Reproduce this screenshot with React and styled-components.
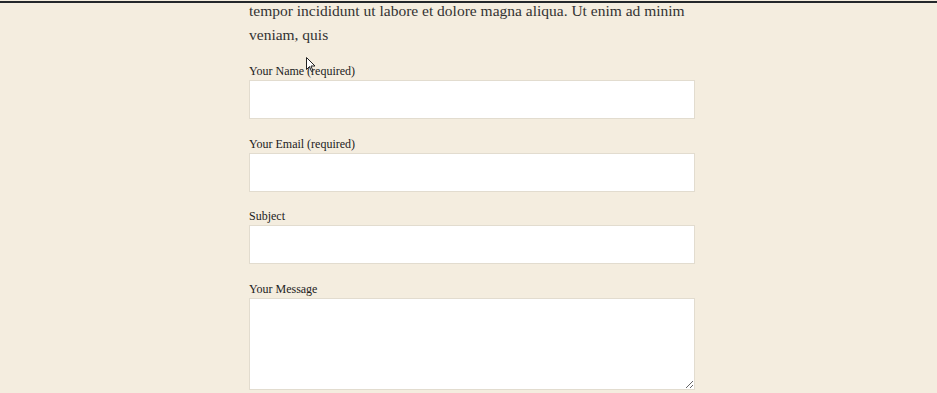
import React from "react";
import styled, { createGlobalStyle } from "styled-components";

const GlobalStyle = createGlobalStyle`
  html, body {
    margin: 0;
    padding: 0;
    background-color: #f4eddf;
  }
  body {
    font-family: "Liberation Serif", "Times New Roman", serif;
    color: #333333;
  }
`;

const Page = styled.div`
  position: relative;
  height: 393px;
  overflow: hidden;
  background-color: #f4eddf;
`;

const TopBar = styled.div`
  position: absolute;
  left: 0;
  right: 0;
  top: 1px;
  height: 2px;
  background-color: #23272b;
  z-index: 2;
`;

const Column = styled.main`
  width: 446px;
  margin-left: 249px;
  margin-top: -1px;
  display: flex;
  flex-direction: column;
`;

const Intro = styled.p`
  margin: 0 0 17px;
  font-size: 15.5px;
  line-height: 24px;
  color: #333333;
`;

const ContactForm = styled.form`
  display: flex;
  flex-direction: column;
  gap: 17.5px;
`;

const Field = styled.label`
  display: flex;
  flex-direction: column;
  gap: 1px;
  font-size: 12px;
  line-height: 15px;
  color: #222222;
`;

const TextInput = styled.input`
  box-sizing: border-box;
  width: 100%;
  height: 39px;
  margin: 0;
  border: 1px solid #e2dccf;
  background-color: #ffffff;
  outline: none;
  font: inherit;
`;

const MessageInput = styled.textarea`
  box-sizing: border-box;
  width: 100%;
  height: 92px;
  margin: 0;
  border: 1px solid #e2dccf;
  background-color: #ffffff;
  outline: none;
  resize: vertical;
  font: inherit;
`;

const Cursor = styled.svg`
  position: absolute;
  left: 306px;
  top: 57px;
  width: 10px;
  height: 16px;
  pointer-events: none;
`;

export default function App() {
  return (
    <>
      <GlobalStyle />
      <Page>
        <TopBar />
        <Column>
          <Intro>
            tempor incididunt ut labore et dolore magna aliqua. Ut enim ad minim
            veniam, quis
          </Intro>
          <ContactForm onSubmit={(e) => e.preventDefault()}>
            <Field>
              Your Name (required)
              <TextInput type="text" />
            </Field>
            <Field>
              Your Email (required)
              <TextInput type="email" />
            </Field>
            <Field>
              Subject
              <TextInput type="text" />
            </Field>
            <Field>
              Your Message
              <MessageInput />
            </Field>
          </ContactForm>
        </Column>
        <Cursor viewBox="0 0 10 16">
          <path
            d="M0.5 0.5 L0.5 12.5 L3.5 9.5 L5.5 14.5 L7 14 L5 9 L9 9 Z"
            fill="#ffffff"
            stroke="#222222"
            strokeWidth="1"
            strokeLinejoin="round"
          />
        </Cursor>
      </Page>
    </>
  );
}
